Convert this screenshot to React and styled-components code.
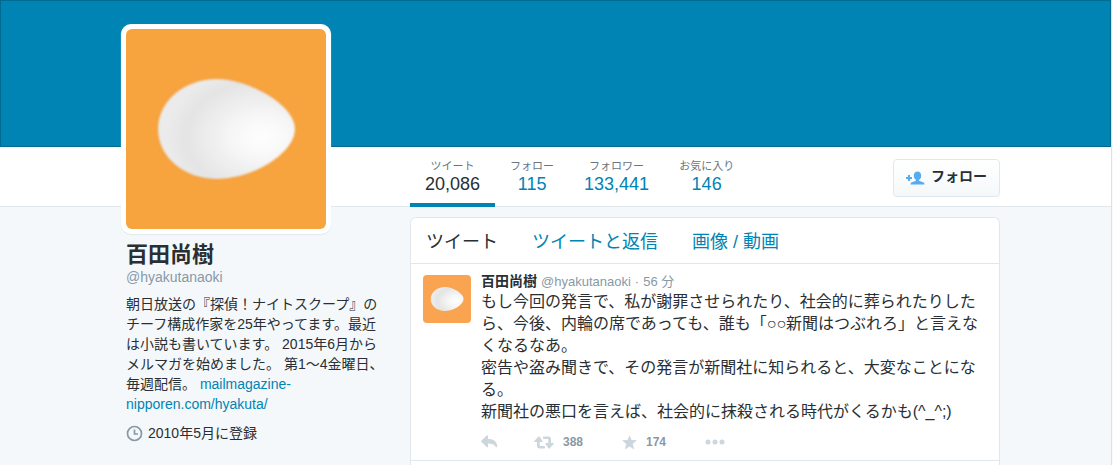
import styled, { createGlobalStyle } from "styled-components";

const GlobalStyle = createGlobalStyle`
    * {
        box-sizing: border-box;
    }

    body {
        margin: 0;
        background-color: #fafafa;
        color: #292f33;
        font-family: "Liberation Sans", "Noto Sans CJK JP", sans-serif;
        font-size: 14px;
        line-height: 20px;
        text-spacing-trim: space-all;
    }

    a {
        color: #0084b4;
        text-decoration: none;
    }
`;

const Page = styled.div`
    display: flex;
    flex-direction: column;
    min-height: 100vh;
    margin-right: 1px;
    border-right: 1px solid #e0e0e0;
    background-color: #f5f8fa;
`;

const Banner = styled.header`
    height: 147px;
    background-color: #0084b4;
    border: 1px solid #006a90;
`;

const Bar = styled.div`
    background-color: #fff;
    border-bottom: 1px solid #e1e8ed;
`;

const Container = styled.div`
    display: grid;
    grid-template-columns: 289px minmax(0, 1fr);
    width: 100%;
    max-width: 889px;
    margin: 0 auto;
    padding-left: 10px;
    flex: ${( props ) => ( props.$grow ? "1" : "none" )};
`;

const BarContent = styled.div`
    grid-column: 2;
    display: flex;
    justify-content: space-between;
    align-items: center;
    height: 59px;
`;

const Stats = styled.nav`
    display: flex;
    align-self: stretch;
    margin-bottom: -1px;
`;

const Stat = styled.a`
    display: flex;
    flex-direction: column;
    align-items: center;
    padding: 11px 15px 0;
    border-bottom: 4px solid ${( props ) => ( props.$active ? "#0084b4" : "transparent" )};
`;

const StatLabel = styled.span`
    color: #66757f;
    font-size: 11px;
    line-height: 16px;
`;

const StatValue = styled.span`
    color: ${( props ) => ( props.$active ? "#292f33" : "#0084b4" )};
    font-size: 18px;
    line-height: 20px;
`;

const FollowButton = styled.button`
    display: flex;
    align-items: center;
    gap: 6px;
    height: 38px;
    margin-top: 2px;
    padding: 0 12px;
    border: 1px solid #e1e8ed;
    border-radius: 4px;
    background: linear-gradient(#fff, #f5f8fa);
    color: #292f33;
    font: bold 14px "Liberation Sans", "Noto Sans CJK JP", sans-serif;
    cursor: pointer;
`;

const FollowText = styled.span`
    line-height: 20px;
    padding-bottom: 4px;
`;

const Sidebar = styled.aside`
    position: relative;
    width: 270px;
    margin-top: -183px;
`;

const AvatarFrame = styled.a`
    display: block;
    width: 210px;
    padding: 5px;
    border-radius: 10px;
    background-color: #fff;
    box-shadow: 0 1px 1px #e1e8ed;
`;

const AvatarImage = styled.svg`
    display: block;
    flex: none;
    width: ${( props ) => props.$size}px;
    height: ${( props ) => props.$size}px;
    border-radius: ${( props ) => props.$radius}px;
    background-color: ${( props ) => props.$color};
`;

const Profile = styled.div`
    padding: 9px 5px;
`;

const Name = styled.h1`
    margin: 0;
    font-size: 22px;
    line-height: 24px;
`;

const Handle = styled.a`
    display: block;
    && {
        color: #8899a6;
    }
`;

const Bio = styled.p`
    margin: 7px 0 9px;
`;

const Joined = styled.div`
    display: flex;
    align-items: center;
    gap: 5px;
`;

const Panel = styled.main`
    margin-top: 10px;
    border: 1px solid #e1e8ed;
    border-bottom: 0;
    border-radius: 6px 6px 0 0;
    background-color: #fff;
`;

const Tabs = styled.nav`
    display: flex;
    gap: 34px;
    padding: 13px 15px 10px;
    border-bottom: 1px solid #e1e8ed;
    font-size: 18px;
    line-height: 22px;
`;

const Tab = styled.a`
    && {
        color: ${( props ) => ( props.$active ? "#292f33" : "#0084b4" )};
    }
`;

const Tweet = styled.article`
    display: flex;
    gap: 10px;
    padding: 11px 12px 8px;
    border-bottom: 1px solid #e1e8ed;
`;

const TweetBody = styled.div`
    flex: 1;
    min-width: 0;
`;

const TweetHeader = styled.div`
    display: flex;
    gap: 4px;
    height: 16px;
    line-height: 14px;
    color: #8899a6;
    font-size: 13px;

    a {
        color: #8899a6;
    }

    strong {
        color: #292f33;
        font-size: 14px;
        line-height: 12px;
    }
`;

const TweetText = styled.p`
    margin: 0;
    font-size: 16px;
    line-height: 22px;
    white-space: pre-line;
`;

const Actions = styled.div`
    display: flex;
    align-items: center;
    margin-top: 9px;
`;

const Action = styled.button`
    display: flex;
    align-items: center;
    gap: 9px;
    width: ${( props ) => props.$width}px;
    height: 20px;
    padding: 0;
    border: 0;
    background: none;
    color: #8899a6;
    font: bold 12px "Liberation Sans", sans-serif;
    cursor: pointer;

    svg {
        color: #ccd6dd;
    }
`;

const stats = [
    { label: "ツイート", value: "20,086", active: true },
    { label: "フォロー", value: "115" },
    { label: "フォロワー", value: "133,441" },
    { label: "お気に入り", value: "146" },
];

const tabs = [
    { label: "ツイート", active: true },
    { label: "ツイートと返信" },
    { label: "画像 / 動画" },
];

const tweetText = `もし今回の発言で、私が謝罪させられたり、社会的に葬られたりしたら、今後、内輪の席であっても、誰も「○○新聞はつぶれろ」と言えなくなるなあ。
密告や盗み聞きで、その発言が新聞社に知られると、大変なことになる。
新聞社の悪口を言えば、社会的に抹殺される時代がくるかも(^_^;)`;

const Egg = ({ id, size, radius, color }) => (
    <AvatarImage $size={size} $radius={radius} $color={color} viewBox="0 0 200 200" role="img" aria-label="百田尚樹">
        <defs>
            <radialGradient id={id} cx="0.76" cy="0.58" r="0.7">
                <stop offset="0" stopColor="#fefefe" />
                <stop offset="0.3" stopColor="#f7f7f7" />
                <stop offset="0.8" stopColor="#e4e4e4" />
                <stop offset="1" stopColor="#ebebeb" />
            </radialGradient>
            <filter id={`${id}-shadow`} x="-10%" y="-10%" width="120%" height="120%">
                <feGaussianBlur stdDeviation="2" />
            </filter>
            <filter id={`${id}-soft`} x="-10%" y="-10%" width="120%" height="120%">
                <feGaussianBlur stdDeviation="0.8" />
            </filter>
        </defs>
        <path d="M32 100C32 72 58 50 91 50C123 50 169 76 169 100C169 124 127 150 91 150C58 150 32 128 32 100Z" fill="#f39a30" filter={`url(#${id}-shadow)`} />
        <path d="M32 100C32 72 58 50 91 50C123 50 169 76 169 100C169 124 127 150 91 150C58 150 32 128 32 100Z" fill={`url(#${id})`} filter={`url(#${id}-soft)`} />
    </AvatarImage>
);

const FollowIcon = () => (
    <svg width="19" height="14" viewBox="0 0 19 14" fill="#55acee" aria-hidden="true">
        <path d="M0 6h2V4h2v2h2v2H4v2H2V8H0z" />
        <path d="M11.500 0.500c2.400 0 3.700 1.800 3.700 4.200 0 2-1 3.500-2.200 4.300v0.800l4 1.400c1 0.400 1.500 1 1.500 2.300h-14c0-1.300 0.500-1.900 1.500-2.300l4-1.400v-0.800c-1.200-0.800-2.200-2.300-2.200-4.300 0-2.400 1.300-4.200 3.700-4.200z" />
    </svg>
);

const ClockIcon = () => (
    <svg width="17" height="17" viewBox="0 0 17 17" fill="none" stroke="#8899a6" aria-hidden="true">
        <circle cx="8.500" cy="8.500" r="7" strokeWidth="1.700" />
        <path d="M8.500 4.500v4.500h3.500" strokeWidth="1.700" />
    </svg>
);

const ReplyIcon = () => (
    <svg width="17" height="14" viewBox="0 0 17 14" fill="currentColor" aria-hidden="true">
        <path d="M7 1.200v2.900c5.500 0 9 2.500 9.300 7.300 0 0.900-1.300 1.200-1.700 0.300C13.500 9.500 11 8.500 7 8.500v2.900c0 0.900-0.700 1.100-1.300 0.600L0.500 7c-0.500-0.500-0.500-0.900 0-1.400L5.700 0.600C6.300 0.100 7 0.400 7 1.200z" />
    </svg>
);

const RetweetIcon = () => (
    <svg width="20" height="13" viewBox="0 0 20 13" fill="currentColor" aria-hidden="true">
        <path d="M4.600 0.400L0.300 5c-0.400 0.500-0.200 1 0.400 1H3v4c0 1.500 1 2.500 2.500 2.500H10c1.500 0 1.500-2.500 0-2.500H6.200c-0.400 0-0.500-0.200-0.500-0.500V6H8c0.700 0 0.900-0.500 0.500-1L5.400 0.400c-0.200-0.300-0.600-0.300-0.800 0z" />
        <path d="M15.400 12.600L19.700 8c0.400-0.500 0.200-1-0.400-1H17V3c0-1.500-1-2.500-2.500-2.500H10c-1.500 0-1.500 2.500 0 2.500h3.800c0.400 0 0.500 0.200 0.500 0.500V7H12c-0.700 0-0.900 0.500-0.500 1l3.100 4.600c0.200 0.300 0.600 0.300 0.800 0z" />
    </svg>
);

const StarIcon = () => (
    <svg width="15" height="15" viewBox="0 0 15 15" fill="currentColor" aria-hidden="true">
        <path d="M7.500 0.300L9.500 5.100L14.900 5.300L10.700 8.900L12.200 14.400L7.500 11.400L2.800 14.400L4.300 8.900L0.100 5.300L5.500 5.100z" />
    </svg>
);

const MoreIcon = () => (
    <svg width="20" height="6" viewBox="0 0 20 6" fill="currentColor" aria-hidden="true">
        <circle cx="3" cy="3" r="2.500" />
        <circle cx="10" cy="3" r="2.500" />
        <circle cx="17" cy="3" r="2.500" />
    </svg>
);

const App = () => (
    <>
        <GlobalStyle />
        <Page>
            <Banner />
            <Bar>
                <Container>
                    <BarContent>
                        <Stats>
                            { stats.map((item) => (
                                <Stat key={item.label} href="#" $active={item.active}>
                                    <StatLabel>{item.label}</StatLabel>
                                    <StatValue $active={item.active}>{item.value}</StatValue>
                                </Stat>
                            ))}
                        </Stats>
                        <FollowButton type="button">
                            <FollowIcon />
                            <FollowText>フォロー</FollowText>
                        </FollowButton>
                    </BarContent>
                </Container>
            </Bar>
            <Container $grow>
                <Sidebar>
                    <AvatarFrame href="#">
                        <Egg id="egg-large" size={200} radius={6} color="#f7a43f" />
                    </AvatarFrame>
                    <Profile>
                        <Name>百田尚樹</Name>
                        <Handle href="#">@hyakutanaoki</Handle>
                        <Bio>
                            朝日放送の『探偵！ナイトスクープ』のチーフ構成作家を25年やってます。最近は小説も書いています。 2015年6月からメルマガを始めました。 第1〜4金曜日、毎週配信。 <a href="#">mailmagazine-nipporen.com/hyakuta/</a>
                        </Bio>
                        <Joined>
                            <ClockIcon />
                            <span>2010年5月に登録</span>
                        </Joined>
                    </Profile>
                </Sidebar>
                <Panel>
                    <Tabs>
                        { tabs.map((item) => (
                            <Tab key={item.label} href="#" $active={item.active}>{item.label}</Tab>
                        ))}
                    </Tabs>
                    <Tweet>
                        <Egg id="egg-small" size={48} radius={4} color="#faa350" />
                        <TweetBody>
                            <TweetHeader>
                                <strong>百田尚樹</strong>
                                <a href="#">@hyakutanaoki</a>
                                <span>·</span>
                                <a href="#">56 分</a>
                            </TweetHeader>
                            <TweetText>{tweetText}</TweetText>
                            <Actions>
                                <Action type="button" aria-label="返信" $width={53}><ReplyIcon /></Action>
                                <Action type="button" $width={88}><RetweetIcon />388</Action>
                                <Action type="button" $width={83}><StarIcon />174</Action>
                                <Action type="button" aria-label="その他" $width={20}><MoreIcon /></Action>
                            </Actions>
                        </TweetBody>
                    </Tweet>
                </Panel>
            </Container>
        </Page>
    </>
);

export default App;
